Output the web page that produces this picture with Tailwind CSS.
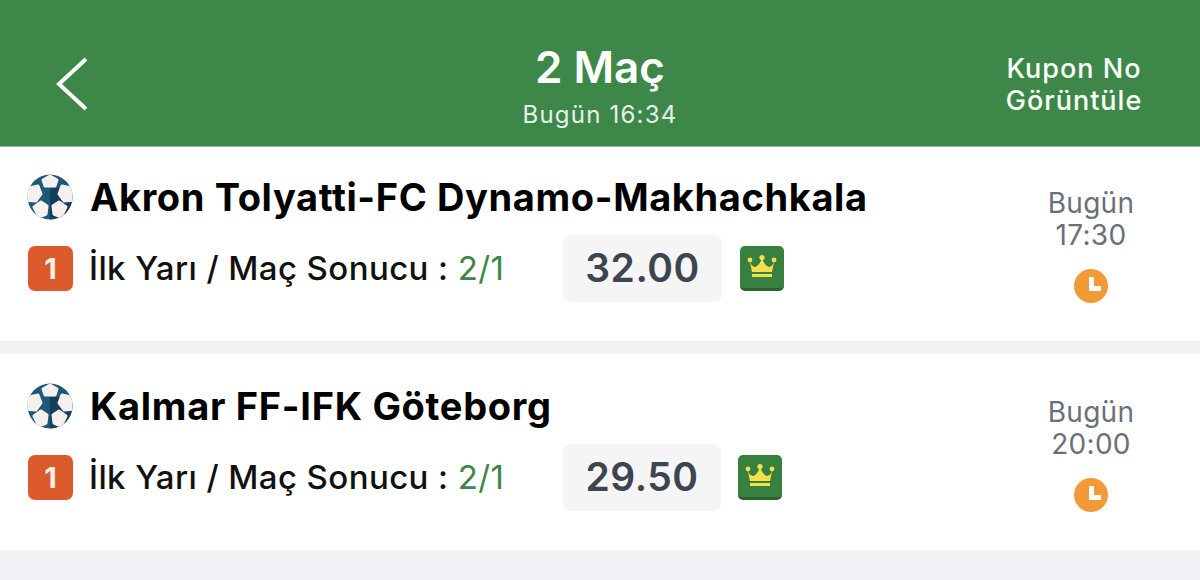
<!DOCTYPE html>
<html lang="en">
<head>
    <meta charset="UTF-8">
    <title>2 Maç</title>
    <script src="https://cdn.jsdelivr.net/npm/@tailwindcss/browser@4"></script>
</head>
<body class="bg-[#f2f2f6] font-['Inter',sans-serif] w-[1200px] h-[580px] overflow-hidden">
    <!-- Header -->
    <div class="h-[147px] bg-[#3d8849] flex text-white border-b border-[#8fb897]">
        <div class="w-[300px] pl-[56px] pt-[57px]">
            <svg width="32" height="54" viewBox="0 0 32 54" fill="none" stroke="#fff" stroke-width="4"><path d="M30 2 L3 27 L30 52"/></svg>
        </div>
        <div class="flex-1 flex flex-col items-center pt-[40px]">
            <div class="text-[44px] leading-[54px] font-semibold">2 Maç</div>
            <div class="text-[24px] leading-[28px] mt-[7px] tracking-[1.2px] text-[#e8f1ea]">Bugün 16:34</div>
        </div>
        <div class="w-[300px] pl-[105px] pt-[53px] text-[27px] leading-[32px] font-medium text-center">
            <div class="w-[138px] tracking-[1px]">Kupon No<br>Görüntüle</div>
        </div>
    </div>

    <!-- Match 1 -->
    <div class="h-[194px] bg-white flex pl-[27px]">
        <div class="w-[990px]">
            <div class="flex items-center gap-[17px] pt-[23px] h-[76px]">
                <svg width="46" height="46" viewBox="0 0 46 46">
                    <clipPath id="ball1"><circle cx="23" cy="23" r="22.5"/></clipPath>
                    <g clip-path="url(#ball1)">
                        <rect width="46" height="46" fill="#1f5877"/>
                        <path d="M23 14 H46 V46 H23 Z" fill="#143f5a"/>
                        <g fill="#f6f1ee" stroke="#f6f1ee" stroke-width="3" stroke-linejoin="round">
                            <path d="M23 2 L30 6 L28 12 L18 12 L16 6 Z"/>
                            <path d="M35 12 L44 14 L48 26 L37 27 L32 20 Z"/>
                            <path d="M11 12 L2 14 L-2 26 L9 27 L14 20 Z"/>
                            <path d="M7 33 L14 28 L20 32 L19 40 L12 43 Z"/>
                            <path d="M39 33 L32 28 L26 32 L27 40 L34 43 Z"/>
                        </g>
                    </g>
                </svg>
                <div class="text-[38px] leading-[44px] font-bold text-black tracking-[0.62px] whitespace-nowrap">Akron Tolyatti-FC Dynamo-Makhachkala</div>
            </div>
            <div class="flex items-center mt-[12px] h-[67px]">
                <div class="ml-[1px] w-[45px] h-[45px] rounded-[7px] bg-[#dc5a2c] text-[#fdf1e8] flex items-center justify-center text-[29px] font-bold">1</div>
                <div class="ml-[16px] w-[474px] text-[33px] font-medium text-[#111] tracking-[0.4px] whitespace-nowrap">İlk Yarı / Maç Sonucu : <span class="font-normal text-[#3d8849]">2/1</span></div>
                <div class="w-[159px] h-[67px] rounded-[8px] bg-[#f5f5f6] text-[#3d4550] text-[39px] font-semibold flex items-center justify-center tracking-[0.5px]">32.00</div>
                <div class="ml-[18px] w-[44px] h-[45px] rounded-[5px] bg-[#37803f] border-b-[3px] border-[#29632f] flex items-center justify-center">
                    <svg width="30" height="24" viewBox="0 0 30 24" fill="#f5df4d"><path d="M3 7 Q6 14 10 11 Q13 9 15 3 Q17 9 20 11 Q24 14 27 7 L25 17 H5 Z"/><circle cx="3" cy="5" r="2.4"/><circle cx="15" cy="2.6" r="2.6"/><circle cx="27" cy="5" r="2.4"/><rect x="5" y="19" width="20" height="3"/></svg>
                </div>
            </div>
        </div>
        <div class="w-[148px] flex flex-col items-center pt-[40px] text-[#69707a] text-[28px] leading-[32px] tracking-[0.3px]">
            <div>Bugün</div>
            <div>17:30</div>
            <svg class="mt-[18px]" width="34" height="34" viewBox="0 0 34 34"><circle cx="17" cy="17" r="17" fill="#f29a38"/><path d="M15 8 H20 V17 H27 V22 H15 Z" fill="#fff"/></svg>
        </div>
    </div>

    <div class="h-[13px]"></div>

    <!-- Match 2 -->
    <div class="h-[196px] bg-white flex pl-[27px]">
        <div class="w-[990px]">
            <div class="flex items-center gap-[17px] pt-[27px] h-[76px]">
                <svg width="46" height="46" viewBox="0 0 46 46">
                    <clipPath id="ball2"><circle cx="23" cy="23" r="22.5"/></clipPath>
                    <g clip-path="url(#ball2)">
                        <rect width="46" height="46" fill="#1f5877"/>
                        <path d="M23 14 H46 V46 H23 Z" fill="#143f5a"/>
                        <g fill="#f6f1ee" stroke="#f6f1ee" stroke-width="3" stroke-linejoin="round">
                            <path d="M23 2 L30 6 L28 12 L18 12 L16 6 Z"/>
                            <path d="M35 12 L44 14 L48 26 L37 27 L32 20 Z"/>
                            <path d="M11 12 L2 14 L-2 26 L9 27 L14 20 Z"/>
                            <path d="M7 33 L14 28 L20 32 L19 40 L12 43 Z"/>
                            <path d="M39 33 L32 28 L26 32 L27 40 L34 43 Z"/>
                        </g>
                    </g>
                </svg>
                <div class="text-[38px] leading-[44px] font-bold text-black tracking-[0.7px] whitespace-nowrap">Kalmar FF-IFK Göteborg</div>
            </div>
            <div class="flex items-center mt-[14px] h-[67px]">
                <div class="ml-[1px] w-[45px] h-[45px] rounded-[7px] bg-[#dc5a2c] text-[#fdf1e8] flex items-center justify-center text-[29px] font-bold">1</div>
                <div class="ml-[16px] w-[474px] text-[33px] font-medium text-[#111] tracking-[0.4px] whitespace-nowrap">İlk Yarı / Maç Sonucu : <span class="font-normal text-[#3d8849]">2/1</span></div>
                <div class="w-[158px] h-[67px] rounded-[8px] bg-[#f5f5f6] text-[#3d4550] text-[39px] font-semibold flex items-center justify-center tracking-[0.5px]">29.50</div>
                <div class="ml-[17px] w-[44px] h-[45px] rounded-[5px] bg-[#37803f] border-b-[3px] border-[#29632f] flex items-center justify-center">
                    <svg width="30" height="24" viewBox="0 0 30 24" fill="#f5df4d"><path d="M3 7 Q6 14 10 11 Q13 9 15 3 Q17 9 20 11 Q24 14 27 7 L25 17 H5 Z"/><circle cx="3" cy="5" r="2.4"/><circle cx="15" cy="2.6" r="2.6"/><circle cx="27" cy="5" r="2.4"/><rect x="5" y="19" width="20" height="3"/></svg>
                </div>
            </div>
        </div>
        <div class="w-[148px] flex flex-col items-center pt-[42px] text-[#69707a] text-[28px] leading-[32px] tracking-[0.3px]">
            <div>Bugün</div>
            <div>20:00</div>
            <svg class="mt-[18px]" width="34" height="34" viewBox="0 0 34 34"><circle cx="17" cy="17" r="17" fill="#f29a38"/><path d="M15 8 H20 V17 H27 V22 H15 Z" fill="#fff"/></svg>
        </div>
    </div>
</body>
</html>
